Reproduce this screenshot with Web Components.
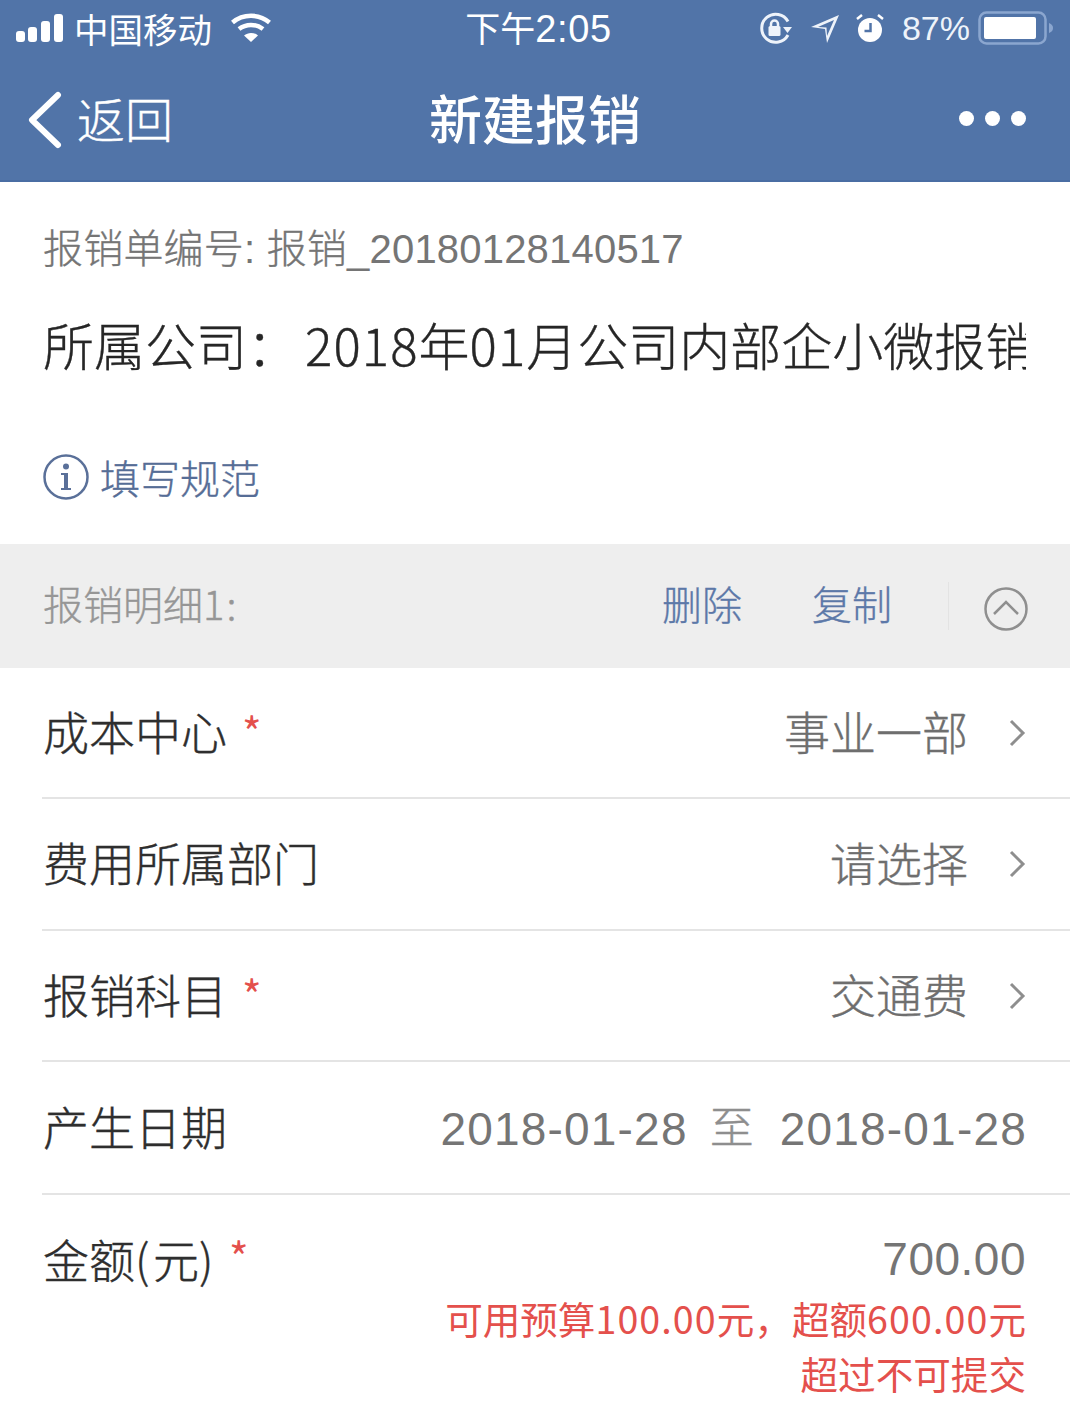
<!DOCTYPE html>
<html lang="zh">
<head>
<meta charset="utf-8">
<title>新建报销</title>
<style>
  html, body { margin: 0; background: #fff; }
  body {
    width: 1070px; height: 1417px; overflow: hidden;
    font-family: "Noto Sans CJK SC", "Liberation Sans", sans-serif;
  }
</style>
</head>
<body>
<app-header></app-header>
<report-intro></report-intro>
<detail-bar></detail-bar>
<form-row label="成本中心" required value="事业一部" arrow></form-row>
<form-row label="费用所属部门" value="请选择" arrow style="--h:132px"></form-row>
<form-row label="报销科目" required value="交通费" arrow></form-row>
<form-row label="产生日期" dates style="--h:133px"></form-row>
<amount-row></amount-row>

<script>
class AppHeader extends HTMLElement {
  constructor() {
    super();
    this.attachShadow({ mode: 'open' });
    this.shadowRoot.innerHTML = `
      <style>
        :host { display: block; height: 182px; background: #5174a8; color: #fff; box-sizing: border-box; border-bottom: 2px solid #4a6da3; }
        .status { height: 54px; display: grid; grid-template-columns: 1fr auto 1fr; align-items: center; padding: 0 16px; font-size: 34.5px; line-height: 54px; }
        .left, .right { display: flex; align-items: center; }
        .left { gap: 10px; }
        .right { justify-content: flex-end; color: #eef3fa; }
        .clock { font-size: 38px; letter-spacing: .6px; margin-left: 7px; font-family: "Liberation Sans", "Noto Sans CJK SC", sans-serif; }
        .clock span { font-family: "Noto Sans CJK SC", sans-serif; font-size: 35px; letter-spacing: 0; }
        .pct { font-family: "Liberation Sans", sans-serif; font-size: 34px; margin: 0 8px 0 16px; }
        .nav { height: 126px; display: grid; grid-template-columns: 1fr auto 1fr; align-items: center; padding: 0 27px; }
        .back { display: flex; align-items: center; gap: 14px; font-size: 48px; font-weight: 300; -webkit-text-stroke: .4px #fff; }
        .back svg { margin-top: 6px; }
        h1 { margin: 0; font-size: 53px; font-weight: 500; line-height: 1; }
        .dots { justify-self: end; display: flex; gap: 11px; margin: 2px 17px 0 0; }
        .dots i { width: 15px; height: 15px; background: #fff; border-radius: 50%; }
        svg { display: block; }
      </style>
      <div class="status">
        <div class="left">
          <svg width="48" height="30" viewBox="0 0 48 30" fill="#fff">
            <rect x="0" y="18" width="9" height="11" rx="3"/><rect x="12" y="14" width="9" height="15" rx="3"/><rect x="25" y="8" width="9" height="21" rx="3"/><rect x="38" y="1" width="9" height="28" rx="3"/>
          </svg>
          <span>中国移动</span>
          <svg width="40" height="30" viewBox="0 0 40 30" style="margin-left:9px" fill="none" stroke="#fff" stroke-width="4.5">
            <path d="M1.5 9.5C12 .5 28 .5 38.500 9.500"/><path d="M8 16C15 10.500 25 10.500 32 16"/><path d="M13 22.500 20 29 27 22.500C23 19 17 19 13 22.500Z" fill="#fff" stroke="none"/>
          </svg>
        </div>
        <div class="clock"><span>下午</span>2:05</div>
        <div class="right">
          <svg width="34" height="32" viewBox="0 0 34 32" fill="none" stroke="#eef3fa" stroke-width="3">
            <path d="M29 9.500A14 14 0 1 0 29 23"/><path d="M24 15h9l-4.500 6z" fill="#eef3fa" stroke="none"/>
            <rect x="9.500" y="14" width="12" height="10" rx="1.500" fill="#eef3fa" stroke="none"/><path d="M12 14V12a3.500 3.500 0 0 1 7 0v2" stroke-width="2.500"/>
          </svg>
          <svg width="30" height="30" viewBox="0 0 30 30" style="margin-left:17px">
            <path d="M1 14 29 2 17 30 15 16Z" fill="#eef3fa"/><path d="M8 14 24 7 17 23 16.500 14.500Z" fill="#5174a8"/>
          </svg>
          <svg width="32" height="32" viewBox="0 0 32 32" style="margin-left:14px">
            <circle cx="16" cy="18" r="12" fill="#fff"/><path d="M16.500 11v8h-6" fill="none" stroke="#5174a8" stroke-width="2.500"/>
            <path d="M3 7 8 3M29 7 24 3" stroke="#fff" stroke-width="2.500"/>
          </svg>
          <span class="pct">87%</span>
          <svg width="76" height="34" viewBox="0 0 76 34">
            <rect x="1.500" y="1.500" width="66" height="31" rx="7" fill="none" stroke="#8ba6cf" stroke-width="2.500"/>
            <rect x="6" y="6" width="52" height="22" rx="2" fill="#fff"/>
            <path d="M71 12c3 1 4 3 4 5s-1 4-4 5z" fill="#8ba6cf"/>
          </svg>
        </div>
      </div>
      <div class="nav">
        <div class="back">
          <svg width="36" height="58" viewBox="0 0 36 58" fill="none" stroke="#fff" stroke-width="6" stroke-linecap="round" stroke-linejoin="round">
            <path d="M31 4 5 29l26 25"/>
          </svg>
          <span>返回</span>
        </div>
        <h1>新建报销</h1>
        <div class="dots"><i></i><i></i><i></i></div>
      </div>
    `;
  }
}

class ReportIntro extends HTMLElement {
  constructor() {
    super();
    this.attachShadow({ mode: 'open' });
    this.shadowRoot.innerHTML = `
      <style>
        :host { display: block; height: 362px; box-sizing: border-box; padding: 40px 44px 0 43px; font-weight: 300; -webkit-text-stroke: .35px; }
        .no { font-family: "Liberation Sans", "Noto Sans CJK SC", sans-serif; font-size: 40px; line-height: 54px; color: #757575; white-space: nowrap; letter-spacing: .2px; }
        .no span { -webkit-text-stroke: 0; }
        .company { margin-top: 36px; font-size: 51px; line-height: 64px; color: #262626; white-space: nowrap; overflow: hidden; }
        .company span { margin-right: 7px; }
        .company b { font-weight: 300; letter-spacing: 1.1px; }
        .rule { margin-top: 74px; display: flex; align-items: center; gap: 11px; font-size: 40px; line-height: 54px; color: #566d96; }
        svg { display: block; }
      </style>
      <div class="no">报销单编号<span>:</span> 报销<span>_20180128140517</span></div>
      <div class="company"><span>所属公司：</span><b>2018</b>年<b>01</b>月公司内部企小微报销</div>
      <div class="rule">
        <svg width="46" height="46" viewBox="0 0 46 46">
          <circle cx="23" cy="23" r="21.500" fill="none" stroke="#5a7099" stroke-width="2.500"/>
          <circle cx="23" cy="12.500" r="3" fill="#5a7099"/>
          <path d="M18 19h7v15h3v2H18v-2h3V21h-3z" fill="#5a7099"/>
        </svg>
        <span>填写规范</span>
      </div>
    `;
  }
}

class DetailBar extends HTMLElement {
  constructor() {
    super();
    this.attachShadow({ mode: 'open' });
    this.shadowRoot.innerHTML = `
      <style>
        :host { display: flex; align-items: center; height: 124px; box-sizing: border-box; background: #eeeeee; padding: 0 42px 6px 43px; font-size: 40px; font-weight: 300; -webkit-text-stroke: .35px; }
        .title { flex: 1; color: #969696; }
        .title b { font-weight: 300; letter-spacing: 2px; }
        .act { color: #5c78a8; margin-right: 70px; }
        .act:nth-of-type(3) { margin-right: 56px; }
        .sep { width: 1px; height: 48px; background: #e3e3e3; margin-right: 35px; margin-top: 6px; }
        svg { display: block; margin-top: 12px; }
      </style>
      <span class="title">报销明细<b>1:</b></span>
      <span class="act">删除</span>
      <span class="act">复制</span>
      <span class="sep"></span>
      <svg width="44" height="44" viewBox="0 0 44 44" fill="none" stroke="#8f8f8f" stroke-width="2.500">
        <circle cx="22" cy="22" r="20.500"/><path d="M10 27 22 15l12 12"/>
      </svg>
    `;
  }
}

class FormRow extends HTMLElement {
  constructor() {
    super();
    this.attachShadow({ mode: 'open' });
  }
  connectedCallback() {
    const star = this.hasAttribute('required') ? '<span class="star">*</span>' : '';
    const arrow = this.hasAttribute('arrow')
      ? `<svg width="17" height="28" viewBox="0 0 17 28" fill="none" stroke="#8e8e8e" stroke-width="3"><path d="M2 2l12 12L2 26"/></svg>` : '';
    const val = this.hasAttribute('dates')
      ? `<span class="num">2018-01-28</span><span class="to">至</span><span class="num">2018-01-28</span>`
      : `<span>${this.getAttribute('value') || ''}</span>`;
    this.shadowRoot.innerHTML = `
      <style>
        :host { display: block; padding-left: 42px; }
        .row { height: var(--h, 131px); box-sizing: border-box; border-bottom: 2px solid #e4e4e4; display: flex; align-items: center; padding: 0 43px 6px 1px; font-size: 46px; font-weight: 300; -webkit-text-stroke: .4px; }
        .label { flex: 1; color: #2e2e2e; display: flex; align-items: center; white-space: nowrap; }
        .star { color: #e4504c; font-size: 42px; font-weight: 400; margin-left: 15px; line-height: 1; margin-top: 2px; -webkit-text-stroke: 0; }
        .val { display: flex; align-items: center; color: #6e6e6e; }
        .val svg { margin-left: 41px; margin-right: 1px; margin-top: 6px; }
        .num { font-family: "Liberation Sans", sans-serif; font-weight: 400; color: #757575; font-size: 46px; letter-spacing: 1.2px; margin-top: 8px; -webkit-text-stroke: 0; }
        .to { margin: 0 26px 0 22px; color: #8e8e8e; font-size: 44px; }
      </style>
      <div class="row">
        <div class="label">${this.getAttribute('label')}${star}</div>
        <div class="val">${val}${arrow}</div>
      </div>
    `;
  }
}

class AmountRow extends HTMLElement {
  constructor() {
    super();
    this.attachShadow({ mode: 'open' });
    this.shadowRoot.innerHTML = `
      <style>
        :host { display: flex; justify-content: space-between; padding: 32px 44px 0 43px; box-sizing: border-box; }
        .label { font-size: 46px; font-weight: 300; -webkit-text-stroke: .4px; line-height: 62px; color: #2e2e2e; white-space: nowrap; }
        .paren { letter-spacing: 3.5px; }
        .star { color: #e4504c; font-size: 42px; font-weight: 400; margin-left: 12px; vertical-align: 4px; line-height: 1; -webkit-text-stroke: 0; }
        .right { text-align: right; }
        .amount { font-family: "Liberation Sans", sans-serif; font-size: 46px; line-height: 65px; color: #757575; letter-spacing: .5px; }
        .warn { font-size: 37.6px; line-height: 55px; margin-top: -2px; color: #e4504c; white-space: nowrap; }
        .warn b { font-weight: 400; letter-spacing: 1.1px; }
      </style>
      <div class="label">金额<span class="paren">(</span>元<span class="paren">)</span><span class="star">*</span></div>
      <div class="right">
        <div class="amount">700.00</div>
        <div class="warn">可用预算<b>100.00</b>元，超额<b>600.00</b>元<br>超过不可提交</div>
      </div>
    `;
  }
}

customElements.define('app-header', AppHeader);
customElements.define('report-intro', ReportIntro);
customElements.define('detail-bar', DetailBar);
customElements.define('form-row', FormRow);
customElements.define('amount-row', AmountRow);
</script>
</body>
</html>
